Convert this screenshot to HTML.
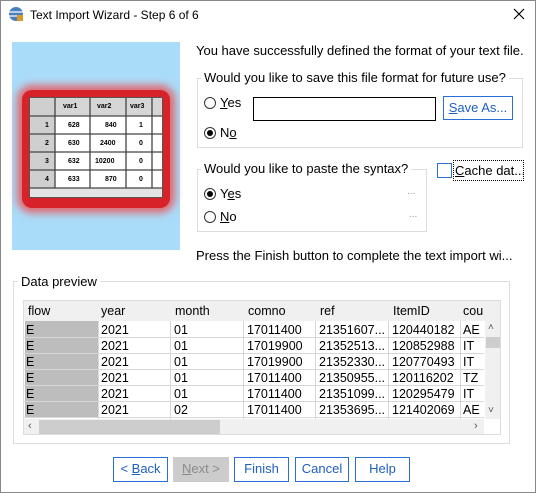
<!DOCTYPE html>
<html><head><style>
*{box-sizing:border-box;margin:0;padding:0}
body{width:536px;height:493px;background:#fff;font-family:"Liberation Sans",sans-serif;font-size:12px;color:#000;position:relative;overflow:hidden}
.a{position:absolute}
.win{left:0;top:0;width:536px;height:493px;border:1px solid #888}
.grp{border:1px solid #dcdcdc}
.lg{background:#fff;padding:0 3px;font-size:13px}
.rad{width:12px;height:12px;border:1px solid #333;border-radius:50%;background:#fff}
.rad.on::after{content:"";position:absolute;left:2px;top:2px;width:6px;height:6px;border-radius:50%;background:#000}
.btn{border:1px solid #2a6fd6;background:#fff;color:#1f5fc0;text-align:center;line-height:22px;font-size:13px}
u{text-decoration:underline}
.cell{position:absolute;font-size:12.5px;white-space:nowrap}
.t{font-size:13px}
</style></head><body>
<div class="a win"></div>
<svg class="a" style="left:8px;top:6px" width="16" height="16" viewBox="0 0 16 16"><circle cx="8" cy="8" r="7" fill="#4a7fbf"/><path d="M1 6h14M1 10h14" stroke="#dfe9f5" stroke-width="1.5"/><rect x="9" y="9" width="6" height="6" fill="#d99a2b"/></svg>
<div class="a" style="left:30px;top:8px;font-size:12px">Text Import Wizard - Step 6 of 6</div>
<svg class="a" style="left:513px;top:8px" width="12" height="12"><path d="M1 1L11 11M11 1L1 11" stroke="#000" stroke-width="1.2"/></svg>
<div class="a" style="left:12px;top:42px;width:168px;height:208px;background:#a9dcf9"></div>
<div class="a" style="left:22px;top:90px;width:148px;height:118px;border-radius:10px;background:#d8222a;box-shadow:0 0 8px 5px #e06a70"></div>
<div class="a" style="left:29px;top:97px;width:134px;height:101px;background:#fff;border:1px solid #555;overflow:hidden;font-size:7px;font-weight:bold">
<div class="a" style="left:0;top:0;width:134px;height:18px;background:#d6d6d6"></div>
<div class="a" style="left:0;top:0;width:25px;height:90px;background:#cfcfcf"></div>
<div class="a" style="left:0;top:90px;width:134px;height:10px;background:#e4e4e4"></div>
<svg class="a" style="left:0;top:0" width="134" height="100"><g stroke="#444" stroke-width="1.3"><path d="M25 0V90M60 0V90M96 0V90M122 0V90M0 18H134M0 36H134M0 54H134M0 72H134M0 90H134"/></g></svg>
<div class="a" style="left:33px;top:5px">var1</div><div class="a" style="left:67px;top:5px">var2</div><div class="a" style="left:100px;top:5px">var3</div>
<div class="a" style="left:15px;top:24px">1</div><div class="a" style="left:38px;top:24px">628</div><div class="a" style="left:75px;top:24px">840</div><div class="a" style="left:109px;top:24px">1</div>
<div class="a" style="left:15px;top:42px">2</div><div class="a" style="left:38px;top:42px">630</div><div class="a" style="left:70px;top:42px">2400</div><div class="a" style="left:109px;top:42px">0</div>
<div class="a" style="left:15px;top:60px">3</div><div class="a" style="left:38px;top:60px">632</div><div class="a" style="left:65px;top:60px">10200</div><div class="a" style="left:109px;top:60px">0</div>
<div class="a" style="left:15px;top:78px">4</div><div class="a" style="left:38px;top:78px">633</div><div class="a" style="left:75px;top:78px">870</div><div class="a" style="left:109px;top:78px">0</div>
</div>
<div class="a t" style="left:196px;top:43px">You have successfully defined the format of your text file.</div>
<div class="a grp" style="left:197px;top:78px;width:326px;height:70px"></div>
<div class="a lg" style="left:201px;top:70px">Would you like to save this file format for future use?</div>
<div class="a rad" style="left:204px;top:97px"></div><div class="a t" style="left:220px;top:95px"><u>Y</u>es</div>
<div class="a" style="left:253px;top:97px;width:183px;height:24px;border:1px solid #000"></div>
<div class="a btn" style="left:443px;top:96px;width:70px;height:24px"><u>S</u>ave As...</div>
<div class="a rad on" style="left:204px;top:127px"></div><div class="a t" style="left:220px;top:125px">N<u>o</u></div>
<div class="a grp" style="left:197px;top:169px;width:230px;height:63px"></div>
<div class="a lg" style="left:201px;top:161px">Would you like to paste the syntax?</div>
<div class="a rad on" style="left:204px;top:188px"></div><div class="a t" style="left:220px;top:186px">Y<u>e</u>s</div>
<div class="a rad" style="left:204px;top:211px"></div><div class="a t" style="left:220px;top:209px"><u>N</u>o</div>
<div class="a" style="left:407px;top:186px;color:#999;font-size:10px">...</div><div class="a" style="left:409px;top:209px;color:#999;font-size:10px">...</div>
<div class="a" style="left:437px;top:163px;width:15px;height:15px;border:1px solid #2a6fd6"></div>
<div class="a" style="left:453px;top:160px;width:71px;height:21px;border:1px dotted #000"></div>
<div class="a t" style="left:455px;top:163px;white-space:nowrap"><u>C</u>ache dat...</div>
<div class="a t" style="left:196px;top:248px">Press the Finish button to complete the text import wi...</div>
<div class="a grp" style="left:13px;top:281px;width:497px;height:163px"></div>
<div class="a lg" style="left:18px;top:274px">Data preview</div>
<div class="a" style="left:23px;top:300px;width:478px;height:135px;border:1px solid #ddd;overflow:hidden;background:#fff">
<div class="a" style="left:0;top:0;width:478px;height:20px;background:#f0f0f0"></div>
<div class="a" style="left:1px;top:20px;width:73px;height:97px;background:#bdbdbd"></div>
<svg class="a" style="left:0;top:0" width="478" height="118"><g stroke="#d8d8d8"><path d="M0 36.5H460M0 52.5H460M0 68.5H460M0 84.5H460M0 100.5H460M0 116.5H460M74.5 20V118M146.5 20V118M219.5 20V118M291.5 20V118M364.5 20V118M436.5 20V118"/></g></svg>
<div class="cell" style="left:4px;top:3px">flow</div><div class="cell" style="left:77px;top:3px">year</div><div class="cell" style="left:151px;top:3px">month</div><div class="cell" style="left:224px;top:3px">comno</div><div class="cell" style="left:296px;top:3px">ref</div><div class="cell" style="left:369px;top:3px">ItemID</div><div class="cell" style="left:439px;top:3px">cou</div>
<div class="a" style="left:0;top:21px;width:460px;font-size:12.5px;line-height:16px">
<div class="a" style="left:2px">E<br>E<br>E<br>E<br>E<br>E</div>
<div class="a" style="left:77px">2021<br>2021<br>2021<br>2021<br>2021<br>2021</div>
<div class="a" style="left:150px">01<br>01<br>01<br>01<br>01<br>02</div>
<div class="a" style="left:223px">17011400<br>17019900<br>17019900<br>17011400<br>17011400<br>17011400</div>
<div class="a" style="left:295px;white-space:nowrap">21351607...<br>21352513...<br>21352330...<br>21350955...<br>21351099...<br>21353695...</div>
<div class="a" style="left:368px">120440182<br>120852988<br>120770493<br>120116202<br>120295479<br>121402069</div>
<div class="a" style="left:439px">AE<br>IT<br>IT<br>TZ<br>IT<br>AE</div>
</div>
<div class="a" style="left:461px;top:20px;width:17px;height:98px;background:#f0f0f0"></div>
<div class="a" style="left:462px;top:36px;width:15px;height:11px;background:#cdcdcd"></div>
<div class="a" style="left:464px;top:21px;font-size:10px;color:#555">˄</div>
<div class="a" style="left:464px;top:104px;font-size:10px;color:#555">˅</div>
<div class="a" style="left:0;top:118px;width:460px;height:17px;background:#f0f0f0"></div>
<div class="a" style="left:15px;top:119px;width:181px;height:14px;background:#cdcdcd"></div>
<div class="a" style="left:4px;top:119px;font-size:11px;color:#555">&lsaquo;</div>
<div class="a" style="left:450px;top:119px;font-size:11px;color:#555">&rsaquo;</div>
</div>
<div class="a btn" style="left:113px;top:457px;width:55px;height:25px">&lt; <u>B</u>ack</div>
<div class="a" style="left:173px;top:457px;width:56px;height:25px;background:#ccc;color:#8a8a8a;text-align:center;line-height:23px;font-size:13px"><u>N</u>ext &gt;</div>
<div class="a btn" style="left:234px;top:457px;width:55px;height:25px">Finish</div>
<div class="a btn" style="left:295px;top:457px;width:54px;height:25px">Cancel</div>
<div class="a btn" style="left:355px;top:457px;width:55px;height:25px">Help</div>
</body></html>
